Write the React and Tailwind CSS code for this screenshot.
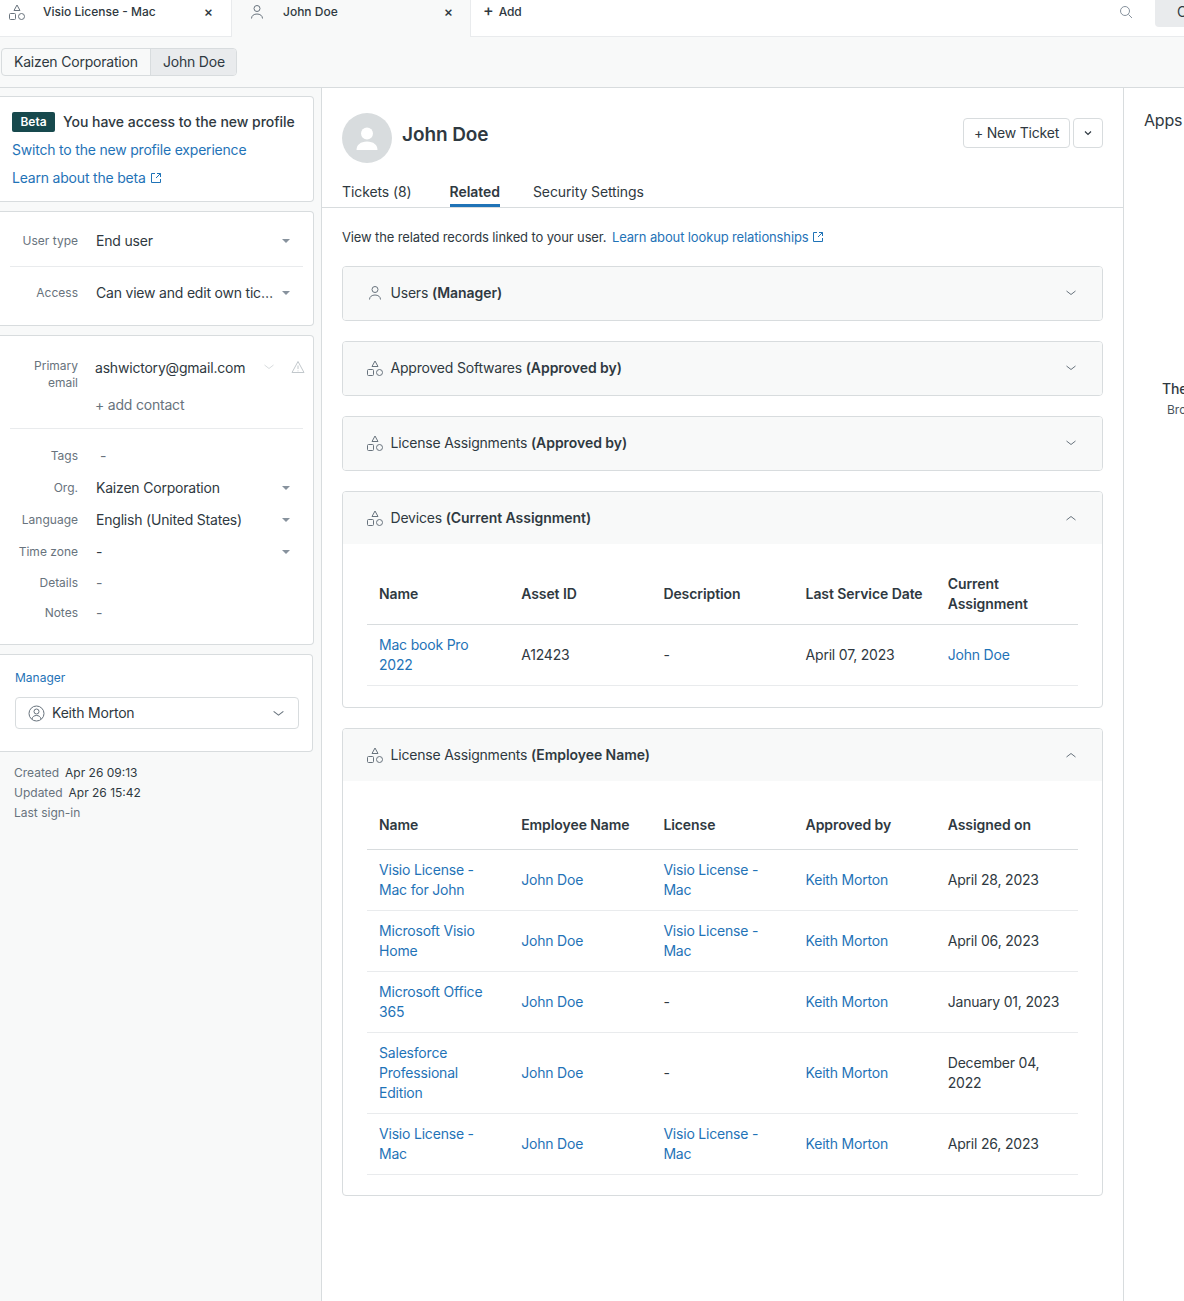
const SHAPES = (
  <svg width="16" height="16" viewBox="0 0 16 16" fill="none" stroke="#68737d" strokeWidth="1">
    <path d="M8 1l3 5.500H5z" />
    <rect x="0.500" y="9.500" width="6" height="6" rx="1" />
    <circle cx="12.500" cy="12.500" r="3" />
  </svg>
);

const PERSON = (
  <svg width="16" height="16" viewBox="0 0 16 16" fill="none" stroke="#68737d" strokeWidth="1">
    <circle cx="8" cy="4.500" r="3" />
    <path d="M2.500 14.500c0-2.800 2.400-4.500 5.500-4.500s5.500 1.700 5.500 4.500" />
  </svg>
);

function ExternalIcon() {
  return (
    <svg width="12" height="12" viewBox="0 0 12 12" fill="none" stroke="#1f73b7" strokeWidth="1" className="inline-block ml-1 align-[-1px]">
      <path d="M5 1.500H1.500v9h9V7M7 1.500h3.500V5M10.500 1.500L6 6" />
    </svg>
  );
}

function Caret() {
  return (
    <svg width="10" height="6" viewBox="0 0 10 6" className="shrink-0">
      <path d="M1 1h8L5 5z" fill="#87929d" />
    </svg>
  );
}

function Chevron({ up = false, size = 12 }) {
  return (
    <svg width={size} height={size} viewBox="0 0 12 12" fill="none" stroke="#68737d" strokeWidth="1" className={up ? "rotate-180" : ""}>
      <path d="M1.500 4l4.500 3.500L10.500 4" />
    </svg>
  );
}

function Link({ children }) {
  return <span className="text-[#1f73b7]">{children}</span>;
}

function FieldRow({ label, value, caret = true, muted = false, className = "" }) {
  return (
    <div className={`flex items-center ${className}`}>
      <div className="w-[78px] shrink-0 text-right text-xs tracking-normal text-[#68737d]">{label}</div>
      <div className={`ml-[18px] w-[178px] truncate ${muted ? "text-[#68737d]" : ""}`}>{value}</div>
      <div className="ml-[7px] w-[10px]">{caret && <Caret />}</div>
    </div>
  );
}

function Accordion({ icon, title, bold, open = false, children }) {
  return (
    <div className="border border-[#d8dcde] rounded-[4px] overflow-hidden">
      <div className={`bg-[#f8f9f9] flex items-center pl-[24px] pr-[25px] ${open ? "h-[52px]" : "h-[53px] pb-[2px]"}`}>
        <div className="w-[16px] flex justify-center shrink-0">{icon}</div>
        <div className="ml-[7.5px] flex-1">
          {title} <span className="font-semibold tracking-[-0.05px]">{bold}</span>
        </div>
        <Chevron up={open} />
      </div>
      {children}
    </div>
  );
}

function RecordTable({ headers, rows, headClass, bottomClass }) {
  return (
    <div className={`px-[24px] pt-[20px] ${bottomClass}`}>
      <table className="w-full table-fixed border-collapse">
        <thead>
          <tr className="border-b border-[#d8dcde]">
            {headers.map((h) => (
              <th key={h} className={`pl-[12px] pr-[8px] text-left font-semibold tracking-[-0.08px] align-middle ${headClass}`}>{h}</th>
            ))}
          </tr>
        </thead>
        <tbody>
          {rows.map((row, i) => (
            <tr key={i} className="border-b border-[#e9ebed]">
              {row.map((cell, j) => (
                <td key={j} className="px-[12px] py-[10px] align-middle">
                  {typeof cell === "string" ? cell : <Link>{cell.link}</Link>}
                </td>
              ))}
            </tr>
          ))}
        </tbody>
      </table>
    </div>
  );
}

const l = (t) => ({ link: t });

const LICENSES = [
  [l("Visio License - Mac for John"), l("John Doe"), l("Visio License - Mac"), l("Keith Morton"), "April 28, 2023"],
  [l("Microsoft Visio Home"), l("John Doe"), l("Visio License - Mac"), l("Keith Morton"), "April 06, 2023"],
  [l("Microsoft Office 365"), l("John Doe"), "-", l("Keith Morton"), "January 01, 2023"],
  [l("Salesforce Professional Edition"), l("John Doe"), "-", l("Keith Morton"), "December 04, 2022"],
  [l("Visio License - Mac"), l("John Doe"), l("Visio License - Mac"), l("Keith Morton"), "April 26, 2023"],
];

export default function App() {
  return (
    <div className="w-[1184px] h-[1301px] overflow-hidden flex flex-col bg-white text-sm tracking-[-0.2px] text-[#2f3941] font-['Inter',sans-serif]">
      {/* tabs */}
      <div className="h-[37px] shrink-0 flex border-b border-[#e9ebed] text-xs font-medium tracking-normal">
        <div className="w-[231px] flex pl-[9px] pt-[4px] pr-[18px]">
          <div className="h-[16px]">{SHAPES}</div>
          <div className="ml-[18px] flex-1">Visio License - Mac</div>
          <span className="text-sm leading-4">×</span>
        </div>
        <div className="w-[240px] h-[37px] flex pl-[17px] pt-[4px] pr-[17px] bg-[#f8f9f9] border-l border-r border-[#e9ebed]">
          <div className="h-[16px]">{PERSON}</div>
          <div className="ml-[18px] flex-1">John Doe</div>
          <span className="text-sm leading-4">×</span>
        </div>
        <div className="ml-[12px] pt-[3px] flex items-start">
          <span className="text-base leading-[14px] mr-[5px]">+</span>
          <span className="mt-px tracking-[-0.1px]">Add</span>
        </div>
        <div className="ml-auto flex items-start">
          <svg width="14" height="14" viewBox="0 0 14 14" fill="none" stroke="#87929d" strokeWidth="1" className="mt-[5px] mr-[22px]">
            <circle cx="6" cy="6" r="4.500" />
            <path d="M9.500 9.500L13 13" />
          </svg>
          <div className="w-[29px] h-[27px] bg-[#e9ebed] rounded-bl-[4px] pl-[22px] pt-[2px] overflow-hidden text-sm font-normal">C</div>
        </div>
      </div>

      {/* breadcrumb */}
      <div className="h-[51px] shrink-0 bg-[#f8f9f9] border-b border-[#d8dcde] pt-[11px] pl-px">
        <div className="flex w-[236px] h-[28px] border border-[#d8dcde] rounded-[4px] overflow-hidden items-center whitespace-nowrap">
          <div className="pl-[12px] h-full flex items-center border-r border-[#d8dcde] w-[149px]">Kaizen Corporation</div>
          <div className="pl-[12px] flex-1 h-full flex items-center bg-[#e9ebed]">John Doe</div>
        </div>
      </div>

      <div className="flex-1 flex min-h-0">
        {/* sidebar */}
        <aside className="w-[322px] shrink-0 bg-[#f8f9f9] border-r border-[#d8dcde] pt-[8px]">
          <div className="w-[314px] h-[106px] bg-white border border-l-0 border-[#d8dcde] rounded-r-[4px] pl-[12px] pt-[15px]">
            <div className="flex items-center h-[20px]">
              <span className="h-[20px] w-[43px] rounded-[2px] bg-[#17494d] text-white text-xs font-semibold tracking-normal flex items-center justify-center">Beta</span>
              <span className="ml-[8px] font-medium tracking-[-0.03px]">You have access to the new profile</span>
            </div>
            <div className="mt-[8px]"><Link>Switch to the new profile experience</Link></div>
            <div className="mt-[8px]"><Link>Learn about the beta<ExternalIcon /></Link></div>
          </div>

          <div className="mt-[9px] w-[314px] h-[115px] bg-white border border-l-0 border-[#d8dcde] rounded-r-[4px] pt-[19px]">
            <FieldRow label="User type" value="End user" className="h-[20px]" />
            <div className="mx-[10px] mt-[15px] border-t border-[#e9ebed]" />
            <FieldRow label="Access" value="Can view and edit own tickets only" className="h-[20px] mt-[16px]" />
          </div>

          <div className="mt-[9px] w-[314px] h-[310px] bg-white border border-l-0 border-[#d8dcde] rounded-r-[4px] pt-[22px]">
            <div className="flex items-start">
              <div className="w-[78px] -mt-px pl-[28px] text-right text-xs leading-[17px] tracking-normal text-[#68737d]">Primary email</div>
              <div className="ml-[17px] w-[168px]">
                <div className="leading-5">ashwictory@gmail.com</div>
                <div className="mt-[17px] text-[#68737d]">+ add contact</div>
              </div>
              <div className="mt-[3px]">
                <svg width="12" height="12" viewBox="0 0 12 12" fill="none" stroke="#d8dcde" strokeWidth="1"><path d="M1.500 4l4.500 3.500L10.500 4" /></svg>
              </div>
              <svg width="14" height="14" viewBox="0 0 14 14" fill="none" stroke="#c2c8cc" strokeWidth="1" className="ml-[16px] mt-[2px]">
                <path d="M7 1.500L13 12.500H1zM7 5.500v3.500M7 10.500v.8" />
              </svg>
            </div>
            <div className="mx-[10px] mt-[13px] border-t border-[#e9ebed]" />
            <FieldRow label="Tags" value={<span className="ml-[4px] text-[#68737d]">-</span>} caret={false} className="h-[20px] mt-[17px]" />
            <FieldRow label="Org." value="Kaizen Corporation" className="h-[20px] mt-[12px]" />
            <FieldRow label="Language" value="English (United States)" className="h-[20px] mt-[12px]" />
            <FieldRow label="Time zone" value="-" className="h-[20px] mt-[12px]" />
            <FieldRow label="Details" value="-" caret={false} muted className="h-[20px] mt-[11px]" />
            <FieldRow label="Notes" value="-" caret={false} muted className="h-[20px] mt-[10px]" />
          </div>

          <div className="mt-[9px] w-[313px] h-[98px] bg-white border border-l-0 border-[#d8dcde] rounded-r-[4px] pl-[15px] pr-[13px] pt-[15px]">
            <div className="text-xs leading-4 tracking-normal text-[#1f73b7]">Manager</div>
            <div className="mt-[11px] h-[32px] border border-[#d8dcde] rounded-[4px] flex items-center pl-[12px] pr-[13px]">
              <svg width="17" height="17" viewBox="0 0 17 17" fill="none" stroke="#68737d" strokeWidth="1">
                <circle cx="8.500" cy="8.500" r="7.500" />
                <circle cx="8.500" cy="6.500" r="2.500" />
                <path d="M4 14c.500-2.500 2.300-3.500 4.500-3.500S12.500 11.500 13 14" />
              </svg>
              <span className="ml-[7px] flex-1">Keith Morton</span>
              <Chevron size={13} />
            </div>
          </div>

          <div className="mt-[11px] pl-[14px] text-xs leading-5 tracking-normal">
            <div><span className="text-[#68737d]">Created</span><span className="ml-[6px]">Apr 26 09:13</span></div>
            <div><span className="text-[#68737d]">Updated</span><span className="ml-[6px]">Apr 26 15:42</span></div>
            <div className="text-[#68737d]">Last sign-in</div>
          </div>
        </aside>

        {/* main */}
        <main className="w-[802px] shrink-0 border-r border-[#d8dcde]">
          <div className="px-[20px] pt-[25px] border-b border-[#d8dcde] h-[120px]">
            <div className="flex items-start">
              <div className="w-[50px] h-[50px] rounded-full bg-[#d8dcde] flex items-center justify-center">
                <svg width="24" height="24" viewBox="0 0 24 24" fill="#fff">
                  <circle cx="12" cy="7.500" r="6" />
                  <path d="M1.500 24c0-5 4-8.500 10.500-8.500S22.500 19 22.500 24z" />
                </svg>
              </div>
              <div className="ml-[10px] mt-[8px] text-[19px] leading-7 font-semibold tracking-[-0.1px]">John Doe</div>
              <div className="ml-auto mt-[5px] flex">
                <div className="h-[30px] w-[107px] border border-[#d8dcde] rounded-[4px] flex items-center justify-center">+ New Ticket</div>
                <div className="ml-[3px] h-[30px] w-[30px] border border-[#d8dcde] rounded-[4px] flex items-center justify-center">
                  <svg width="8" height="6" viewBox="0 0 8 6" fill="none" stroke="#2f3941" strokeWidth="1.200"><path d="M1 1.500l3 3 3-3" /></svg>
                </div>
              </div>
            </div>
            <div className="mt-[19px] flex h-[26px] tracking-[-0.1px]">
              <div>Tickets (8)</div>
              <div className="ml-[38px] font-semibold tracking-[-0.05px] h-[25px] border-b-[3px] border-[#1f73b7]">Related</div>
              <div className="ml-[33px]">Security Settings</div>
            </div>
          </div>

          <div className="px-[20px] pt-[19px]">
            <div className="text-[13px] leading-5 tracking-[-0.13px]">
              View the related records linked to your user. <span className="ml-[2px]"><Link>Learn about lookup relationships<ExternalIcon /></Link></span>
            </div>
            <div className="mt-[19px] flex flex-col gap-[20px]">
              <Accordion icon={PERSON} title="Users" bold="(Manager)" />
              <Accordion icon={SHAPES} title="Approved Softwares" bold="(Approved by)" />
              <Accordion icon={SHAPES} title="License Assignments" bold="(Approved by)" />
              <Accordion icon={SHAPES} title="Devices" bold="(Current Assignment)" open>
                <RecordTable
                  headClass="py-[10px]"
                  bottomClass="pb-[21px]"
                  headers={["Name", "Asset ID", "Description", "Last Service Date", "Current Assignment"]}
                  rows={[[l("Mac book Pro 2022"), "A12423", "-", "April 07, 2023", l("John Doe")]]}
                />
              </Accordion>
              <Accordion icon={SHAPES} title="License Assignments" bold="(Employee Name)" open>
                <RecordTable
                  headClass="py-[14px]"
                  bottomClass="pb-[20px]"
                  headers={["Name", "Employee Name", "License", "Approved by", "Assigned on"]}
                  rows={LICENSES}
                />
              </Accordion>
            </div>
          </div>
        </main>

        {/* apps panel */}
        <div className="flex-1 min-w-0 overflow-hidden pl-[20px]">
          <div className="mt-[20px] text-base leading-6 whitespace-nowrap">Apps</div>
          <div className="mt-[247px] ml-[18px] font-medium whitespace-nowrap">The</div>
          <div className="mt-[3px] ml-[23px] text-xs tracking-normal text-[#49545c] whitespace-nowrap">Browse</div>
        </div>
      </div>
    </div>
  );
}
